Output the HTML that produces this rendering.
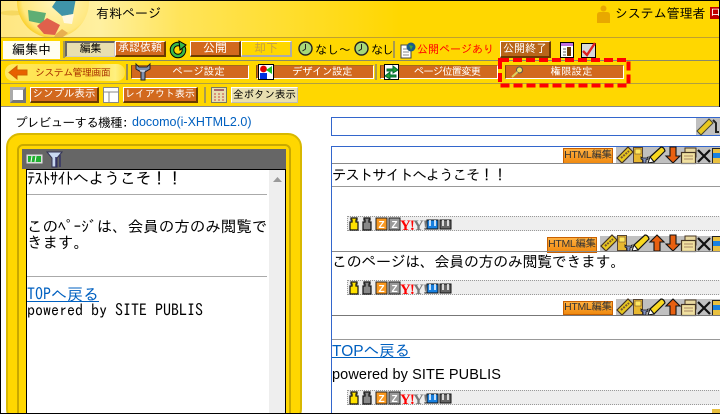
<!DOCTYPE html>
<html lang="ja"><head><meta charset="utf-8">
<style>
html,body{margin:0;padding:0;width:720px;height:414px;overflow:hidden;background:#fff}
#w{position:absolute;left:0;top:0;width:720px;height:414px;overflow:hidden;background:#fff;font-family:"Liberation Sans","IPAGothic","Noto Sans CJK JP",sans-serif;color:#000}
.a{position:absolute;white-space:nowrap}
svg{position:absolute;display:block;overflow:visible}
.b{position:absolute;box-sizing:border-box;background:#d2691e;color:#fff;border:1px solid;border-color:#fff #6b3a00 #6b3a00 #fff;border-width:1px 2px 2px 1px;font-size:11px;line-height:13px;text-align:center;white-space:nowrap;font-family:"IPAGothic","Liberation Sans",sans-serif}
.m{position:absolute;box-sizing:border-box;background:#d2691e;color:#fff;border:1px solid #fff;border-left-color:#7a4a10;border-top-color:#a06a20;font-size:10.5px;line-height:12px;text-align:center;white-space:nowrap;font-family:"IPAGothic",sans-serif}
.g{font-family:"IPAGothic","Noto Sans CJK JP",sans-serif}
.sep{position:absolute;width:2px;background:#a89a50}
.h{position:absolute;height:1px;background:#999}
.html{position:absolute;box-sizing:border-box;width:50px;height:16px;background:linear-gradient(#ffb040,#f08a10);border:1px solid #c86000;font:10.5px/13px "Liberation Sans","IPAGothic",sans-serif;letter-spacing:-.3px;color:#333;text-align:center;white-space:nowrap}
.tile{position:absolute;background:#c0c0c0}
.bar{position:absolute;left:347px;width:373px;height:13px;background:#eee;border:1px dotted #999;border-right:0;box-sizing:content-box}
.t{position:absolute;font-family:"IPAGothic",sans-serif;white-space:nowrap;font-size:15px;line-height:16px;color:#000}
</style></head><body><div id="w">

<!-- header -->
<div class="a" style="left:0;top:0;width:720px;height:107px;background:#ffd700"></div>
<div class="a" style="left:0;top:1px;width:400px;height:36px;background:linear-gradient(90deg,#ffe680 0,#fff0a0 25%,#ffe45a 45%,#ffd700 100%)"></div>
<svg style="left:0;top:0" width="110" height="38" viewBox="0 0 110 38">
<defs><radialGradient id="lg" cx=".55" cy=".45" r=".6"><stop offset="0" stop-color="#fff6c0"/><stop offset=".8" stop-color="#ffe880"/><stop offset="1" stop-color="#f8c810"/></radialGradient>
<clipPath id="lc"><rect x="0" y="1" width="110" height="36"/></clipPath></defs>
<g clip-path="url(#lc)"><ellipse cx="12" cy="13" rx="12" ry="2.5" fill="#f6d860"/>
<circle cx="53" cy="2" r="36" fill="url(#lg)"/>
<polygon points="52,7 58,-2 76,-2 73,14 62,16" fill="#3f93a8"/>
<polygon points="28,10 46,13 43,24 29,21" fill="#5fae74"/>
<polygon points="37,26 47,18 60,25 55,35 44,34" fill="#e0604c"/>
<polygon points="56,34 62,29 68,33 63,37 54,37" fill="#e8b050"/>
<polygon points="62,16 74,14 72,24 64,23" fill="#fff8e0"/></g>
</svg>
<div class="a g" style="left:96px;top:6px;font-size:13px;line-height:15px">有料ページ</div>
<svg style="left:596px;top:5px" width="15" height="18"><circle cx="7.5" cy="3.5" r="3" fill="#e8a800"/><path d="M1 18V10q0-3 3-3h7q3 0 3 3v8z" fill="#e8a800"/></svg>
<div class="a g" style="left:615px;top:6px;font-size:13px;line-height:15px;letter-spacing:-.1px">システム管理者</div>
<div class="a g" style="left:710px;top:7px;width:9px;height:12px;background:#c00000;color:#fff;font-size:11px;line-height:12px;overflow:hidden">ロ</div>

<!-- lines -->
<div class="a" style="left:0;top:37px;width:720px;height:1px;background:#c0a030"></div>
<div class="a" style="left:0;top:60px;width:720px;height:1px;background:#8a8a6a"></div>
<div class="a" style="left:0;top:83px;width:720px;height:1px;background:#b0a040"></div>
<div class="a" style="left:0;top:106px;width:720px;height:1px;background:#888"></div>

<!-- row 2 -->
<div class="a g" style="left:3px;top:41px;width:57px;height:18px;background:#fffef0;font-size:13px;line-height:18px;text-align:center">編集中</div>
<div class="sep" style="left:63px;top:41px;height:17px"></div>
<div class="b" style="left:65px;top:41px;width:50px;height:16px;background:#e8dfb0;color:#000;border-color:#666 #ccc #ccc #666;border-width:2px 1px 1px 2px;font-size:11px;line-height:12px">編集</div>
<div class="b" style="left:115px;top:41px;width:51px;height:16px;line-height:12px;font-size:11px">承認依頼</div>
<svg style="left:170px;top:41px" width="17" height="17" viewBox="0 0 17 17"><circle cx="8" cy="9" r="6" fill="none" stroke="#000" stroke-width="4.5"/><circle cx="8" cy="9" r="6" fill="none" stroke="#38b848" stroke-width="2.6"/><path d="M9 0l7 4-6 5z" fill="#38b848" stroke="#000"/></svg>
<div class="b" style="left:190px;top:41px;width:51px;height:16px;line-height:12px;font-size:12px">公開</div>
<div class="b" style="left:241px;top:41px;width:51px;height:16px;line-height:12px;font-size:12px;background:#ffd700;color:#c8a040;border-color:#fff #aaa #aaa #fff">却下</div>
<svg style="left:298px;top:41px" width="15" height="15"><circle cx="7.5" cy="7.5" r="6.5" fill="#a8d878" stroke="#222" stroke-width="1.4"/><path d="M7.5 3v5l-3 2" stroke="#222" fill="none"/></svg>
<div class="a g" style="left:315px;top:43px;font-size:12px;line-height:14px;letter-spacing:-.2px">なし〜</div>
<svg style="left:354px;top:41px" width="15" height="15"><circle cx="7.5" cy="7.5" r="6.5" fill="#a8d878" stroke="#222" stroke-width="1.4"/><path d="M7.5 3v5l-3 2" stroke="#222" fill="none"/></svg>
<div class="a g" style="left:371px;top:43px;font-size:12px;line-height:14px;letter-spacing:-1.5px">なし</div>
<div class="sep" style="left:393px;top:41px;height:17px"></div>
<svg style="left:400px;top:42px" width="16" height="17"><path d="M1 3h10v13H1z" fill="#fff" stroke="#444"/><path d="M3 7h6M3 10h6M3 13h6" stroke="#888"/><circle cx="11" cy="5" r="4.5" fill="#1a5a8a"/><path d="M9 3l4 1-2 4z" fill="#40a040"/></svg>
<div class="a g" style="left:417px;top:43px;font-size:11px;line-height:14px;color:#f00">公開ページあり</div>
<div class="b" style="left:500px;top:41px;width:51px;height:17px;line-height:13px;background:#b8651a">公開終了</div>
<svg style="left:560px;top:42px" width="15" height="16"><rect x=".5" y=".5" width="13" height="15" fill="#fff" stroke="#000"/><rect x="1" y="1" width="12" height="3" fill="#c070e0"/><rect x="7" y="5" width="4" height="9" fill="#6a3a00"/><path d="M3 7h3M3 10h3M3 13h3" stroke="#666"/></svg>
<svg style="left:581px;top:42px" width="16" height="16"><rect x=".5" y="1.5" width="14" height="14" fill="#d8d8d8" stroke="#000"/><path d="M2 9l4 4 8-12" fill="none" stroke="#e02020" stroke-width="2.4"/></svg>

<!-- row 3 -->
<div class="a" style="left:5px;top:64px;width:120px;height:17px;border-radius:8px;background:linear-gradient(90deg,#ffe860,#ffe040 70%,#fff080 92%,#ffe040)"></div>
<svg style="left:8px;top:65px" width="20" height="15"><path d="M1 7.5L9 1v4h10v5H9v4z" fill="#e86000" stroke="#d06000"/></svg>
<div class="a g" style="left:35px;top:66px;font-size:10px;line-height:14px;color:#a83000;letter-spacing:-.6px">システム管理画面</div>
<div class="sep" style="left:126px;top:64px;height:16px;background:#998a50"></div>
<div class="m" style="left:131px;top:65px;width:118px;height:14px;padding-left:17px">ページ設定</div>
<svg style="left:134px;top:63px" width="17" height="18"><path d="M2 1v5l5 3v8h4V9l5-3V1l-3 3H5z" fill="#8090b0" stroke="#222"/><path d="M6 8h5" stroke="#fff"/></svg>
<div class="m" style="left:256px;top:65px;width:118px;height:14px;padding-left:14px;letter-spacing:-.5px">デザイン設定</div>
<svg style="left:258px;top:64px" width="16" height="16"><rect x=".5" y=".5" width="15" height="15" fill="#fff" stroke="#000"/><circle cx="5.5" cy="5" r="3.4" fill="#e00000"/><rect x="2" y="9" width="7" height="6" fill="#0030e0"/><path d="M14 2v8L8 6z" fill="#20c020"/></svg>
<div class="sep" style="left:375px;top:64px;height:16px"></div>
<div class="m" style="left:380px;top:65px;width:118px;height:14px;padding-left:16px;letter-spacing:-1px">ページ位置変更</div>
<svg style="left:384px;top:64px" width="16" height="16"><rect x=".5" y=".5" width="14" height="15" fill="#fff" stroke="#000"/><path d="M3 5h6V2l5 4-5 3V7H3zM12 11H6V8l-5 4 5 3v-2h6z" fill="#20a030" stroke="#063"/></svg>
<div class="m" style="left:505px;top:65px;width:119px;height:14px;padding-left:14px">権限設定</div>
<svg style="left:510px;top:66px" width="14" height="12"><circle cx="9.5" cy="4" r="3" fill="#f0e060" stroke="#555"/><path d="M7.5 6L2 11" stroke="#ddd060" stroke-width="2"/></svg>
<svg style="left:498px;top:58px" width="133" height="30"><rect x="2" y="2" width="128.500" height="25.500" fill="none" stroke="#f00" stroke-width="4" stroke-dasharray="9 4"/></svg>

<!-- row 4 -->
<div class="a" style="left:10px;top:87px;width:16px;height:16px;box-sizing:border-box;background:#fff;border:3px solid #999;border-color:#aaa #777 #777 #aaa"></div>
<div class="b" style="left:30px;top:87px;width:69px;height:16px;line-height:12px;font-size:10.5px">シンプル表示</div>
<svg style="left:103px;top:87px" width="16" height="16"><rect x=".5" y=".5" width="15" height="15" fill="#fff" stroke="#888"/><path d="M1 5h14M6 5v10" stroke="#888"/></svg>
<div class="b" style="left:123px;top:87px;width:75px;height:16px;line-height:12px;font-size:10px">レイアウト表示</div>
<div class="sep" style="left:204px;top:87px;height:16px"></div>
<svg style="left:211px;top:87px" width="16" height="16"><rect x=".5" y=".5" width="15" height="15" fill="#e8dfb0" stroke="#776"/><path d="M3 3h10" stroke="#a66" stroke-width="2"/><path d="M3 7h2M7 7h2M11 7h2M3 10h2M7 10h2M11 10h2M3 13h2M7 13h2M11 13h2" stroke="#c44"/></svg>
<div class="b" style="left:231px;top:87px;width:67px;height:16px;background:#e8dfb0;color:#000;border-color:#fff #bbb #bbb #fff;border-width:1px;font-size:10.5px;line-height:14px">全ボタン表示</div>

<!-- frame -->
<div class="a" style="left:0;top:0;width:720px;height:1px;background:#000"></div>
<div class="a" style="left:0;top:0;width:1px;height:414px;background:#000"></div>
<div class="a" style="left:719px;top:0;width:1px;height:107px;background:#000"></div>
<div class="a g" style="left:15px;top:115px;font-size:12.5px;line-height:15px;letter-spacing:-.6px">プレビューする機種:</div>
<div class="a" style="left:132px;top:115px;font-size:12.5px;line-height:15px;color:#0060c0">docomo(i-XHTML2.0)</div>

<!-- phone -->
<div class="a" style="left:6px;top:133px;width:296px;height:290px;box-sizing:border-box;background:#ffd700;border:2px solid #d8b800;border-radius:14px"></div>
<div class="a" style="left:17px;top:144px;width:274px;height:280px;box-sizing:border-box;border:2px solid #c8a800;border-radius:6px;background:#ffd700"></div>
<div class="a" style="left:22px;top:149px;width:264px;height:20px;background:#666"></div>
<svg style="left:25px;top:152px" width="40" height="16"><rect x="1" y="2" width="17" height="10" fill="#ddd" stroke="#666"/><rect x="3" y="4" width="13" height="6" fill="#20b030"/><path d="M7 4l-1 6M11 4l-1 6" stroke="#fff"/><path d="M22 0h15l-5 6v9h-5V6z" fill="#c8d8f0" stroke="#335"/><path d="M31 5v10M35 3v12" stroke="#336" stroke-width="1.5"/></svg>
<div class="a" style="left:26px;top:169px;width:260px;height:245px;box-sizing:border-box;background:#fff;border:1px solid #000;border-bottom:0"></div>
<div class="a" style="left:269px;top:170px;width:16px;height:243px;background:#eee"></div>
<svg style="left:273px;top:177px" width="9" height="5"><path d="M0 5L4.500 0 9 5z" fill="#999"/></svg>
<div class="t" style="left:27px;top:170px;font-size:16px;line-height:16px;letter-spacing:-.35px">ﾃｽﾄｻｲﾄへようこそ！！</div>
<div class="h" style="left:27px;top:194px;width:240px;background:#aaa"></div>
<div class="t" style="left:27px;top:218px;font-size:15.500px">このﾍﾟｰｼﾞは、会員の方のみ閲覧で</div>
<div class="t" style="left:27px;top:234px;font-size:15.500px">きます。</div>
<div class="h" style="left:27px;top:276px;width:240px;background:#aaa"></div>
<div class="t" style="left:27px;top:286px;font-size:16px;color:#0060c0;text-decoration:underline">TOPへ戻る</div>
<div class="t" style="left:27px;top:302px;font-size:16px">powered by SITE PUBLIS</div>

<!-- right -->
<div class="a" style="left:331px;top:117px;width:389px;height:19px;box-sizing:border-box;border:1px solid #3366cc;border-right:0"></div>
<div class="tile" style="left:696px;top:118px;width:24px;height:17px"></div>
<svg style="left:696px;top:118px" width="24" height="17"><path d="M1 13L13 1l4 4L5 17z" fill="#e8c820" stroke="#443"/><path d="M17 2l3 3v9h3" fill="none" stroke="#222" stroke-width="2"/></svg>
<div class="a" style="left:331px;top:146px;width:389px;height:1px;background:#3366cc"></div>
<div class="a" style="left:331px;top:146px;width:1px;height:268px;background:#3366cc"></div>

<!-- toolbar 1 -->
<div class="html" style="left:563px;top:148px">HTML編集</div>
<div class="tile" style="left:616px;top:147px;width:104px;height:16px"></div>
<svg style="left:616px;top:146px" width="104" height="18">
<path d="M1 12L12 1l5 5L6 17z" fill="#e8c820" stroke="#432" stroke-width="1.2"/><path d="M5 12l8-7" stroke="#753" stroke-width="2" stroke-dasharray="2 1"/>
<rect x="17.500" y="1.500" width="9" height="15" fill="#e8b830" stroke="#543"/><rect x="19" y="3" width="6" height="5" fill="#ffe860" stroke="#753" stroke-width=".6"/>
<path d="M25 11v2l2 1v3h3v-3l2-1v-2l-1 1h-5z" fill="#8090c0" stroke="#111" stroke-width=".8"/>
<path d="M34 11L45 1q3 0 4 4L38 16z" fill="#f8d820" stroke="#111" stroke-width="1.2"/><path d="M34 11l-2 6 6-1z" fill="#fff" stroke="#111"/>
<path d="M54 1h6v9h4l-7 7-7-7h4z" fill="#e86010" stroke="#111" stroke-width="1.1"/>
<rect x="69" y="2" width="11" height="9" fill="#e8d8a0" stroke="#432"/><rect x="65.500" y="6.500" width="14" height="11" fill="#f0e0a0" stroke="#432" stroke-width="1.2"/><path d="M68 10h9M68 13h9" stroke="#a86"/>
<path d="M82 4l12 12M94 4L82 16" stroke="#111" stroke-width="2.200"/>
<rect x="96.500" y="2.500" width="8" height="15" fill="#e8c040" stroke="#222"/><rect x="97" y="7" width="7" height="5" fill="#1880e0"/>
</svg>
<div class="h" style="left:332px;top:163px;width:388px;background:#888"></div>
<div class="t" style="left:332px;top:167px;font-size:14.500px;line-height:16px;letter-spacing:-1.100px">テストサイトへようこそ！！</div>
<div class="h" style="left:332px;top:186px;width:388px;background:#999"></div>

<!-- bar 1 -->
<div class="bar" style="top:216px"></div>
<svg style="left:349px;top:217px" width="125" height="14"><path d="M2 1h6v2H7v2h2v8H1V5h2V3H2z" fill="#ffe000" stroke="#111" stroke-width="1.2"/><path d="M15 1h6v2h-1v2h2v8h-8V5h2V3h-1z" fill="#888" stroke="#111" stroke-width="1.2"/><rect x="27" y="1" width="11" height="12" fill="#f89820" stroke="#222"/><text x="29.500" y="11" font-size="10" font-weight="700" fill="#fff" font-family="Liberation Sans">Z</text><rect x="40" y="1" width="11" height="12" fill="#999" stroke="#222"/><text x="42.500" y="11" font-size="10" font-weight="700" fill="#fff" font-family="Liberation Sans">Z</text><text x="51" y="13" font-size="15" font-weight="700" letter-spacing="-1" fill="#f00" font-family="Liberation Serif">Y!</text><text x="64" y="13" font-size="15" font-weight="700" letter-spacing="-1" fill="#777" font-family="Liberation Serif">Y!</text><rect x="78" y="3" width="11" height="9" fill="#1880e0" stroke="#111"/><path d="M81 3v6M86 3v6" stroke="#fff" stroke-width="1.500"/><rect x="91" y="3" width="11" height="9" fill="#666" stroke="#111"/><path d="M94 3v6M99 3v6" stroke="#fff" stroke-width="1.500"/></svg>

<!-- toolbar 2 -->
<div class="html" style="left:547px;top:237px">HTML編集</div>
<div class="tile" style="left:600px;top:236px;width:120px;height:15px"></div>
<svg style="left:600px;top:234px" width="120" height="18">
<path d="M1 12L12 1l5 5L6 17z" fill="#e8c820" stroke="#432" stroke-width="1.2"/><path d="M5 12l8-7" stroke="#753" stroke-width="2" stroke-dasharray="2 1"/>
<rect x="17.500" y="1.500" width="9" height="15" fill="#e8b830" stroke="#543"/><rect x="19" y="3" width="6" height="5" fill="#ffe860" stroke="#753" stroke-width=".6"/>
<path d="M25 11v2l2 1v3h3v-3l2-1v-2l-1 1h-5z" fill="#8090c0" stroke="#111" stroke-width=".8"/>
<path d="M34 11L45 1q3 0 4 4L38 16z" fill="#f8d820" stroke="#111" stroke-width="1.2"/><path d="M34 11l-2 6 6-1z" fill="#fff" stroke="#111"/>
<path d="M57 1l7 7h-4v9h-6V8h-4z" fill="#e86010" stroke="#111" stroke-width="1.1"/>
<path d="M70 1h6v9h4l-7 7-7-7h4z" fill="#e86010" stroke="#111" stroke-width="1.1"/>
<rect x="85" y="2" width="11" height="9" fill="#e8d8a0" stroke="#432"/><rect x="81.500" y="6.500" width="14" height="11" fill="#f0e0a0" stroke="#432" stroke-width="1.2"/><path d="M84 10h9M84 13h9" stroke="#a86"/>
<path d="M98 4l12 12M110 4L98 16" stroke="#111" stroke-width="2.200"/>
<rect x="112.500" y="2.500" width="8" height="15" fill="#e8c040" stroke="#222"/><rect x="113" y="7" width="7" height="5" fill="#1880e0"/>
</svg>
<div class="h" style="left:332px;top:251px;width:388px;background:#888"></div>
<div class="t" style="left:332px;top:254px;font-size:15px;line-height:16px;letter-spacing:-.35px">このページは、会員の方のみ閲覧できます。</div>

<!-- bar 2 -->
<div class="bar" style="top:280px"></div>
<svg style="left:349px;top:281px" width="125" height="14"><path d="M2 1h6v2H7v2h2v8H1V5h2V3H2z" fill="#ffe000" stroke="#111" stroke-width="1.2"/><path d="M15 1h6v2h-1v2h2v8h-8V5h2V3h-1z" fill="#888" stroke="#111" stroke-width="1.2"/><rect x="27" y="1" width="11" height="12" fill="#f89820" stroke="#222"/><text x="29.500" y="11" font-size="10" font-weight="700" fill="#fff" font-family="Liberation Sans">Z</text><rect x="40" y="1" width="11" height="12" fill="#999" stroke="#222"/><text x="42.500" y="11" font-size="10" font-weight="700" fill="#fff" font-family="Liberation Sans">Z</text><text x="51" y="13" font-size="15" font-weight="700" letter-spacing="-1" fill="#f00" font-family="Liberation Serif">Y!</text><text x="64" y="13" font-size="15" font-weight="700" letter-spacing="-1" fill="#777" font-family="Liberation Serif">Y!</text><rect x="78" y="3" width="11" height="9" fill="#1880e0" stroke="#111"/><path d="M81 3v6M86 3v6" stroke="#fff" stroke-width="1.500"/><rect x="91" y="3" width="11" height="9" fill="#666" stroke="#111"/><path d="M94 3v6M99 3v6" stroke="#fff" stroke-width="1.500"/></svg>

<!-- toolbar 3 -->
<div class="html" style="left:563px;top:301px;height:14px;line-height:11px">HTML編集</div>
<div class="tile" style="left:616px;top:299px;width:104px;height:16px"></div>
<svg style="left:616px;top:298px" width="104" height="18">
<path d="M1 12L12 1l5 5L6 17z" fill="#e8c820" stroke="#432" stroke-width="1.2"/><path d="M5 12l8-7" stroke="#753" stroke-width="2" stroke-dasharray="2 1"/>
<rect x="17.500" y="1.500" width="9" height="15" fill="#e8b830" stroke="#543"/><rect x="19" y="3" width="6" height="5" fill="#ffe860" stroke="#753" stroke-width=".6"/>
<path d="M25 11v2l2 1v3h3v-3l2-1v-2l-1 1h-5z" fill="#8090c0" stroke="#111" stroke-width=".8"/>
<path d="M34 11L45 1q3 0 4 4L38 16z" fill="#f8d820" stroke="#111" stroke-width="1.2"/><path d="M34 11l-2 6 6-1z" fill="#fff" stroke="#111"/>
<path d="M57 1l7 7h-4v9h-6V8h-4z" fill="#e86010" stroke="#111" stroke-width="1.1"/>
<rect x="69" y="2" width="11" height="9" fill="#e8d8a0" stroke="#432"/><rect x="65.500" y="6.500" width="14" height="11" fill="#f0e0a0" stroke="#432" stroke-width="1.2"/><path d="M68 10h9M68 13h9" stroke="#a86"/>
<path d="M82 4l12 12M94 4L82 16" stroke="#111" stroke-width="2.200"/>
<rect x="96.500" y="2.500" width="8" height="15" fill="#e8c040" stroke="#222"/><rect x="97" y="7" width="7" height="5" fill="#1880e0"/>
</svg>
<div class="h" style="left:332px;top:315px;width:388px;background:#777"></div>
<div class="h" style="left:332px;top:339px;width:388px;background:#999"></div>
<div class="t" style="left:332px;top:344px;font-family:'Liberation Sans','IPAGothic',sans-serif;font-size:15.500px;color:#0060c0;text-decoration:underline">TOPへ戻る</div>
<div class="t" style="left:332px;top:367px;font-size:14.500px;font-family:'Liberation Sans',sans-serif;letter-spacing:.1px">powered by SITE PUBLIS</div>

<!-- bar 3 -->
<div class="bar" style="top:390px"></div>
<svg style="left:349px;top:391px" width="125" height="14"><path d="M2 1h6v2H7v2h2v8H1V5h2V3H2z" fill="#ffe000" stroke="#111" stroke-width="1.2"/><path d="M15 1h6v2h-1v2h2v8h-8V5h2V3h-1z" fill="#888" stroke="#111" stroke-width="1.2"/><rect x="27" y="1" width="11" height="12" fill="#f89820" stroke="#222"/><text x="29.500" y="11" font-size="10" font-weight="700" fill="#fff" font-family="Liberation Sans">Z</text><rect x="40" y="1" width="11" height="12" fill="#999" stroke="#222"/><text x="42.500" y="11" font-size="10" font-weight="700" fill="#fff" font-family="Liberation Sans">Z</text><text x="51" y="13" font-size="15" font-weight="700" letter-spacing="-1" fill="#f00" font-family="Liberation Serif">Y!</text><text x="64" y="13" font-size="15" font-weight="700" letter-spacing="-1" fill="#777" font-family="Liberation Serif">Y!</text><rect x="78" y="3" width="11" height="9" fill="#1880e0" stroke="#111"/><path d="M81 3v6M86 3v6" stroke="#fff" stroke-width="1.500"/><rect x="91" y="3" width="11" height="9" fill="#666" stroke="#111"/><path d="M94 3v6M99 3v6" stroke="#fff" stroke-width="1.500"/></svg>
<div class="a" style="left:712px;top:409px;width:8px;height:4px;background:#e8c040"></div>

<div class="a" style="left:0;top:413px;width:720px;height:1px;background:#000"></div>
</div></body></html>
